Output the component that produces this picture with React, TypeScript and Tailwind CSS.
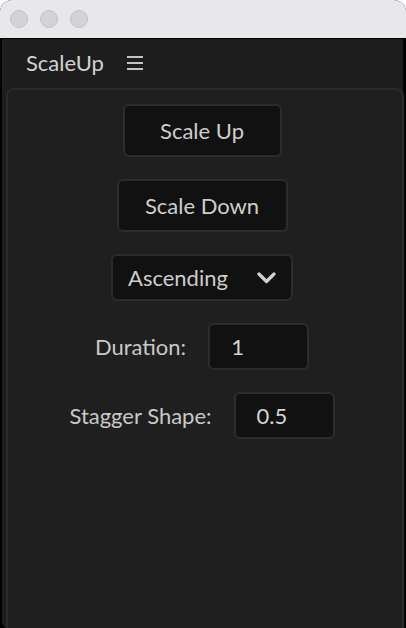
import { FC } from 'react';

const font = { fontFamily: 'Lato, "Open Sans", sans-serif' };

const Button: FC<{ label: string; width: string }> = ({ label, width }) => (
  <button
    className={`flex h-[53px] ${width} items-center justify-center rounded-[6px] border-2 border-[#2c2c2c] bg-[#111111] text-[22px] text-[#cdcdcd]`}
  >
    {label}
  </button>
);

const Field: FC<{ label: string; value: string }> = ({ label, value }) => (
  <div className="flex items-center gap-[22px] text-[22px] text-[#c9c9c9]">
    <span>{label}</span>
    <div className="flex h-[47px] w-[101px] items-center rounded-[6px] border-2 border-[#2c2c2c] bg-[#111111] pl-[21px] text-[#d4d4d4]">
      {value}
    </div>
  </div>
);

export default function App() {
  return (
    <div className="h-[628px] w-[406px] overflow-hidden bg-white" style={font}>
      <div className="flex h-full flex-col overflow-hidden rounded-t-[12px] bg-black">
        {/* title bar */}
        <div className="flex h-[38px] shrink-0 items-center gap-[12px] bg-[#e8e8ec] pl-[10px]">
          <span className="h-[18px] w-[18px] rounded-full border border-[#c2c2c6] bg-[#d3d3d7]" />
          <span className="h-[18px] w-[18px] rounded-full border border-[#c2c2c6] bg-[#d3d3d7]" />
          <span className="h-[18px] w-[18px] rounded-full border border-[#c2c2c6] bg-[#d3d3d7]" />
        </div>
        <div className="mt-px ml-[2px] mr-[3px] flex flex-1 flex-col rounded-bl-[6px] bg-[#1d1d1d]">
          <div className="flex h-[49px] items-center gap-[23px] pb-[3px] pl-[24px]">
            <span className="text-[22px] text-[#d2d2d2]">ScaleUp</span>
            <svg width="16" height="14" viewBox="0 0 16 14" className="mt-[2px]">
              <rect x="0" y="0" width="16" height="2" fill="#c4c4c4" />
              <rect x="0" y="6" width="16" height="2" fill="#c4c4c4" />
              <rect x="0" y="12" width="16" height="2" fill="#c4c4c4" />
            </svg>
          </div>
          <div className="ml-[4px] mr-[-1px] flex flex-1 flex-col items-center gap-[22px] rounded-t-[8px] border-2 border-b-0 border-[#2b2b2b] bg-[#1f1f1f] pr-[6px] pt-[14px]">
            <Button label="Scale Up" width="w-[159px]" />
            <Button label="Scale Down" width="w-[171px]" />
            <div className="flex h-[47px] w-[182px] items-center justify-between rounded-[6px] border-2 border-[#2c2c2c] bg-[#111111] pl-[15px] pr-[15px] text-[22px] text-[#cdcdcd]">
              <span>Ascending</span>
              <svg width="19" height="12" viewBox="0 0 19 12">
                <path
                  d="M2 2 L9.5 9.5 L17 2"
                  fill="none"
                  stroke="#d0d0d0"
                  strokeWidth="3.2"
                  strokeLinecap="round"
                  strokeLinejoin="round"
                />
              </svg>
            </div>
            <Field label="Duration:" value="1" />
            <Field label="Stagger Shape:" value="0.5" />
          </div>
        </div>
      </div>
    </div>
  );
}
